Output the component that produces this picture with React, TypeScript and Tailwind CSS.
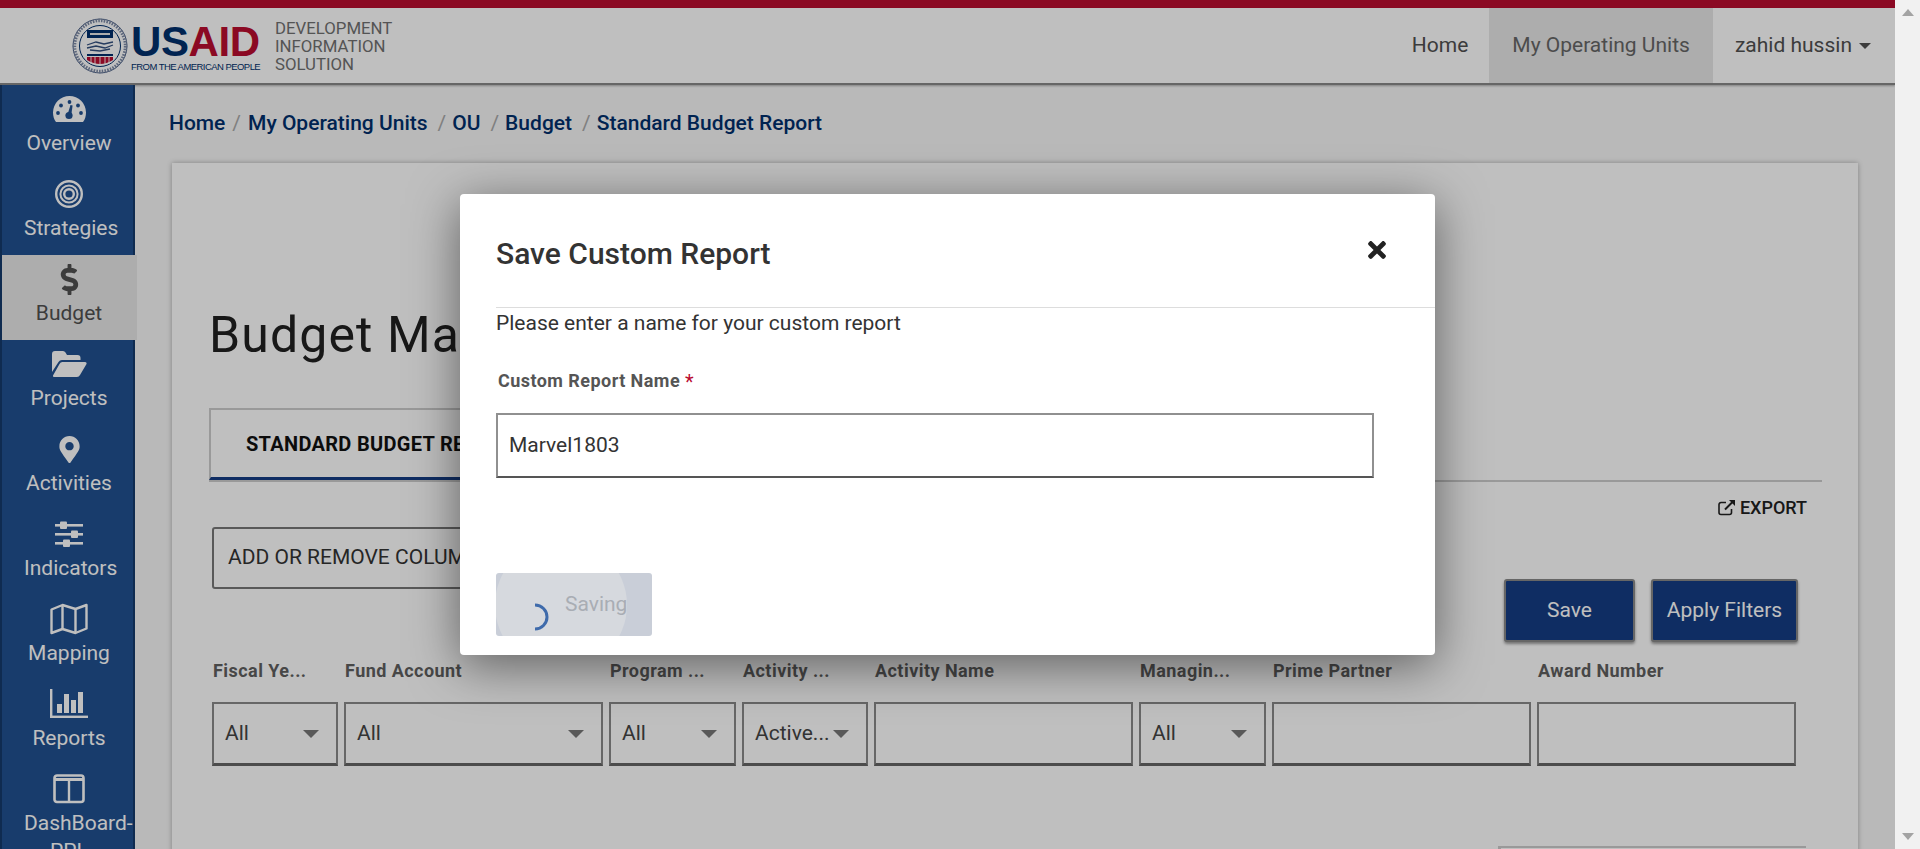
import type { ReactNode } from 'react';
import { FaDollarSign, FaMapMarkerAlt, FaTimes } from 'react-icons/fa';

const GaugeIcon = () => (
  <svg width="33" height="26" viewBox="0 0 33 26" fill="currentColor">
    <path d="M16.5 0 A16.5 16.5 0 0 0 0 16.5 C0 20 1 23.5 3 26 H30 C32 23.5 33 20 33 16.5 A16.5 16.5 0 0 0 16.5 0 Z" />
    <g fill="#205191">
      <circle cx="5" cy="17" r="1.9" />
      <circle cx="8" cy="9.5" r="1.9" />
      <circle cx="16.5" cy="6" r="1.9" />
      <circle cx="25" cy="9.5" r="1.9" />
      <circle cx="28" cy="17" r="1.9" />
      <circle cx="16" cy="19.5" r="3.6" />
      <path d="M17.5 9 L19.6 9.6 L18.2 19.5 L14.5 18.5 Z" />
    </g>
  </svg>
);

const BullseyeIcon = () => (
  <svg width="30" height="30" viewBox="0 0 30 30" fill="none" stroke="currentColor">
    <circle cx="15" cy="15" r="12.8" strokeWidth="2.4" />
    <circle cx="15" cy="15" r="8.6" strokeWidth="2" />
    <circle cx="15" cy="15" r="4.8" strokeWidth="2.4" />
  </svg>
);

const FolderIcon = () => (
  <svg width="35" height="26" viewBox="0 0 35 26" fill="currentColor">
    <path d="M0 3 A3 3 0 0 1 3 0 H11 A3 3 0 0 1 13.5 1.5 L15 4 H25.5 A3 3 0 0 1 28.5 7 V9 H10 A4 4 0 0 0 6.5 11 L0 21 Z" />
    <path d="M10.5 11 H33 A1.5 1.5 0 0 1 34.5 13 L28 24 A4 4 0 0 1 25 26 H2 A1.2 1.2 0 0 1 1 24.5 L7.5 13 A3.5 3.5 0 0 1 10.5 11 Z" />
  </svg>
);

const SlidersIcon = () => (
  <svg width="30" height="30" viewBox="0 0 30 30" fill="currentColor">
    <rect x="1" y="5" width="28" height="2.6" />
    <rect x="6" y="2.5" width="7" height="7.5" rx="1" />
    <rect x="1" y="14" width="28" height="2.6" />
    <rect x="17" y="11.5" width="7" height="7.5" rx="1" />
    <rect x="1" y="23" width="28" height="2.6" />
    <rect x="9" y="20.5" width="7" height="7.5" rx="1" />
  </svg>
);

const MapIcon = () => (
  <svg width="38" height="32" viewBox="0 0 38 32" fill="none" stroke="currentColor" strokeWidth="2.4" strokeLinejoin="round">
    <path d="M1.5 6.5 L12.5 2 L25.5 6 L36.5 2 V25.5 L25.5 30 L12.5 26 L1.5 30 Z" />
    <path d="M12.5 2 V26 M25.5 6 V30" />
  </svg>
);

const ChartIcon = () => (
  <svg width="38" height="30" viewBox="0 0 38 30" fill="currentColor">
    <rect x="0" y="0" width="2.4" height="29" />
    <rect x="0" y="26.6" width="38" height="2.4" />
    <rect x="7" y="15" width="5" height="9" />
    <rect x="14" y="5" width="5" height="19" />
    <rect x="21" y="11" width="5" height="13" />
    <rect x="28" y="3" width="5" height="21" />
  </svg>
);

const ColumnsIcon = () => (
  <svg width="32" height="30" viewBox="0 0 32 30" fill="none" stroke="currentColor">
    <rect x="1.5" y="1.5" width="29" height="26.5" rx="2.5" strokeWidth="2.6" />
    <path d="M1.5 5.5 H30.5" strokeWidth="3" />
    <path d="M16 5 V28" strokeWidth="2.4" />
  </svg>
);

const ExportIcon = () => (
  <svg width="18" height="17" viewBox="0 0 18 17" fill="none" stroke="currentColor" strokeWidth="1.6">
    <path d="M13.5 10 V13.5 A2 2 0 0 1 11.5 15.5 H3 A2 2 0 0 1 1 13.5 V5.5 A2 2 0 0 1 3 3.5 H8" />
    <path d="M7 10.5 L15.5 2" strokeWidth="2" />
    <path d="M11 1 H17 V7 Z" fill="currentColor" stroke="none" />
  </svg>
);

const Seal = () => (
  <svg width="56" height="56" viewBox="0 0 56 56">
    <circle cx="28" cy="28" r="27" fill="#fff" stroke="#4a5f86" strokeWidth="1" />
    <circle cx="28" cy="28" r="25.5" fill="none" stroke="#7c8aa6" strokeWidth="3.4" strokeDasharray="1.6 1.2" />
    <circle cx="28" cy="28" r="20.5" fill="#fff" stroke="#002f6c" strokeWidth="1" />
    <rect x="15" y="12" width="26" height="8" fill="#002f6c" />
    <rect x="18" y="15" width="20" height="2" fill="#e6e6e6" />
    <path d="M15 27 L24 24 L32 26 L41 24 M15 30 L24 28 L33 30 L41 27 M18 32 L28 33 L38 31" fill="none" stroke="#33507f" strokeWidth="1.3" />
    <rect x="15" y="36" width="26" height="2" fill="#002f6c" />
    <path d="M15 39 H41 V42 Q28 50 15 42 Z" fill="#ba0c2f" />
    <path d="M19 39 V46 M23 39 V47 M28 39 V48 M33 39 V47 M37 39 V46" stroke="#fff" strokeWidth="0.9" />
  </svg>
);

const sideItems: { label: string; icon: ReactNode; active?: boolean }[] = [
  { label: 'Overview', icon: <GaugeIcon /> },
  { label: 'Strategies', icon: <BullseyeIcon /> },
  { label: 'Budget', icon: <FaDollarSign size={31} />, active: true },
  { label: 'Projects', icon: <FolderIcon /> },
  { label: 'Activities', icon: <FaMapMarkerAlt size={27} /> },
  { label: 'Indicators', icon: <SlidersIcon /> },
  { label: 'Mapping', icon: <MapIcon /> },
  { label: 'Reports', icon: <ChartIcon /> },
  { label: 'DashBoard-PPL', icon: <ColumnsIcon /> },
];

const filters = [
  { label: 'Fiscal Ye...', value: 'All', width: 'w-[126px]', select: true },
  { label: 'Fund Account', value: 'All', width: 'w-[259px]', select: true },
  { label: 'Program ...', value: 'All', width: 'w-[127px]', select: true },
  { label: 'Activity ...', value: 'Active...', width: 'w-[126px]', select: true },
  { label: 'Activity Name', value: '', width: 'w-[259px]' },
  { label: 'Managin...', value: 'All', width: 'w-[127px]', select: true },
  { label: 'Prime Partner', value: '', width: 'w-[259px]' },
  { label: 'Award Number', value: '', width: 'w-[259px]' },
];

const crumbs = ['Home', 'My Operating Units', 'OU', 'Budget', 'Standard Budget Report'];

export default function App() {
  return (
    <div className="relative flex h-[849px] w-[1920px] overflow-hidden bg-white font-['Roboto',sans-serif] text-[#333]">
      <div className="relative flex w-[1895px] shrink-0 flex-col bg-[#f7f7f7]">
        <div className="h-2 shrink-0 bg-[#ba0c2f]" />

        <header className="flex h-[77px] shrink-0 items-start border-b-2 border-[#888] bg-white pl-[72px] pr-[24px] shadow-[0_1px_2px_rgba(0,0,0,0.3)]">
          <div className="mt-[10px]">
            <Seal />
          </div>
          <div className="ml-[3px] mt-[15px] w-[128px]">
            <div className="whitespace-nowrap font-['Liberation_Sans',sans-serif] text-[42px] font-bold leading-[38px] tracking-[-0.4px]">
              <span className="text-[#002f6c]">US</span>
              <span className="text-[#ba0c2f]">AID</span>
            </div>
            <div className="whitespace-nowrap font-['Liberation_Sans',sans-serif] text-[9.5px] leading-[11px] tracking-[-0.55px] text-[#002f6c]">
              FROM THE AMERICAN PEOPLE
            </div>
          </div>
          <div className="ml-[16px] mt-[11px] text-[16.8px] leading-[18px] text-[#717171]">
            DEVELOPMENT
            <br />
            INFORMATION
            <br />
            SOLUTION
          </div>
          <nav className="ml-auto flex h-[75px] items-center text-[21px] text-[#505050]">
            <span className="pr-[21px]">Home</span>
            <span className="flex h-[75px] items-center bg-[#e7e7e7] px-[23px] text-[#666]">My Operating Units</span>
            <span className="flex items-center pl-[22px]">
              zahid hussin
              <span className="ml-[7px] h-0 w-0 border-x-[6px] border-t-[6px] border-x-transparent border-t-[#505050]" />
            </span>
          </nav>
        </header>

        <div className="flex min-h-0 flex-1">
          <aside className="w-[135px] shrink-0 border-l-2 border-r-2 border-[#143a6b] bg-[#205191] text-white">
            {sideItems.map((item) => (
              <div
                key={item.label}
                className={`flex h-[85px] flex-col items-center pl-[3px] pt-[6px] ${
                  item.active ? 'relative -mr-[4px] bg-[#e7e7e7] pr-[4px] text-[#505050]' : ''
                }`}
              >
                <div className="flex h-[36px] shrink-0 items-center justify-center">{item.icon}</div>
                <div className="mt-[2px] w-[90px] shrink-0 text-center text-[21px] leading-[28px]">{item.label}</div>
              </div>
            ))}
          </aside>

          <main className="min-w-0 flex-1">
            <nav className="ml-[34px] mt-[25px] flex h-[28px] items-center text-[21px] font-medium text-[#002f6c]">
              {crumbs.map((crumb, i) => (
                <span key={crumb} className="flex items-center whitespace-nowrap">
                  {i > 0 && (
                    <span className={`font-normal text-[#aaa] ${i === 1 ? 'mx-[7px]' : 'ml-[10px] mr-[6px]'}`}>/</span>
                  )}
                  {crumb}
                </span>
              ))}
            </nav>

            <section className="ml-[37px] mt-[25px] h-[700px] w-[1686px] bg-white pl-[37px] pr-[36px] pt-[142px] shadow-[0_0_5px_rgba(0,0,0,0.3)]">
              <h1 className="whitespace-nowrap text-[50px] font-normal leading-[60px] tracking-[1.1px] text-[#212121]">Budget Management</h1>

              <div className="mt-[43px] border-b-2 border-[#ccc]">
                <div className="flex h-[72px] w-[288px] items-center whitespace-nowrap border-b-[3px] border-l-2 border-t-2 border-[#ccc] border-b-[#153d84] pl-[35px] text-[20px] font-bold tracking-[0.3px] text-[#111]">
                  STANDARD BUDGET REPORT
                </div>
              </div>

              <div className="flex h-[39px] items-end justify-end pr-[15px]">
                <span className="flex items-center gap-[4px] text-[18px] font-medium text-[#212121]">
                  <ExportIcon />
                  EXPORT
                </span>
              </div>

              <div className="mt-[6px] flex items-start pl-[3px] pr-[24px]">
                <div className="flex h-[62px] w-[400px] items-center whitespace-nowrap rounded-[3px] border-2 border-[#777] pl-[14px] text-[21px] text-[#333]">
                  ADD OR REMOVE COLUMNS
                </div>
                <div className="ml-auto mt-[52px] flex gap-[16px]">
                  <button className="h-[63px] w-[131px] rounded-[3px] border-2 border-[#888] bg-[#153d84] pt-[1px] text-[21px] text-white shadow-[0_2px_3px_rgba(0,0,0,0.4)]">
                    Save
                  </button>
                  <button className="h-[63px] w-[147px] rounded-[3px] border-2 border-[#888] bg-[#153d84] pt-[1px] text-[21px] text-white shadow-[0_2px_3px_rgba(0,0,0,0.4)]">
                    Apply Filters
                  </button>
                </div>
              </div>

              <div className="mt-[16px] flex gap-[6px] pl-[3px]">
                {filters.map((f) => (
                  <div key={f.label} className={`${f.width} shrink-0`}>
                    <div className="h-[24px] truncate pl-[1px] text-[18px] font-bold leading-[26px] tracking-[0.45px] text-[#5f5f5f]">
                      {f.label}
                    </div>
                    <div className="mt-[20px] flex h-[64px] items-center justify-between border-2 border-b-[3px] border-[#8a8a8a] border-b-[#666] pl-[11px] pr-[17px] pt-[1px] text-[21px] text-[#444]">
                      <span>{f.value}</span>
                      {f.select && <span className="h-0 w-0 border-x-[8px] border-t-[8px] border-x-transparent border-t-[#777]" />}
                    </div>
                  </div>
                ))}
              </div>

              <div className="mr-[16px] mt-[80px] ml-auto h-[6px] w-[308px] border-l-[3px] border-t-2 border-[#ccc]" />
            </section>
          </main>
        </div>
      </div>

      <div className="relative flex w-[25px] shrink-0 flex-col items-center justify-between bg-[#f1f1f1] py-[9px]">
        <div className="h-0 w-0 border-x-[6px] border-b-[7px] border-x-transparent border-b-[#a3a3a3]" />
        <div className="h-0 w-0 border-x-[6px] border-t-[7px] border-x-transparent border-t-[#a3a3a3]" />
      </div>

      <div className="absolute left-0 top-0 h-[849px] w-[1895px] bg-black/25">
        <div className="absolute left-[460px] top-[194px] h-[461px] w-[975px] rounded-[4px] bg-white shadow-[0_10px_50px_rgba(0,0,0,0.5)]">
          <div className="ml-[36px] flex h-[114px] items-center justify-between border-b border-[#ddd] pt-[6px]">
            <h2 className="text-[30px] font-medium text-[#333]">Save Custom Report</h2>
            <FaTimes size={26} className="mb-[8px] mr-[45px] text-[#222]" />
          </div>
          <div className="pl-[36px]">
            <p className="text-[21px] leading-[30px] text-[#333]">Please enter a name for your custom report</p>
            <label className="ml-[2px] mt-[30px] block text-[18px] font-bold leading-[24px] tracking-[0.45px] text-[#555]">
              Custom Report Name <span className="relative top-[2px] text-[20px] font-normal text-[#ba0c2f]">*</span>
            </label>
            <div className="mt-[20px] flex h-[65px] w-[878px] items-center border-2 border-[#909090] border-b-[#555] pl-[11px] text-[21px] text-[#333]">
              Marvel1803
            </div>
            <button className="relative mt-[95px] flex h-[63px] w-[156px] items-center overflow-hidden rounded-[3px] bg-[#c9ced8] pt-[1px] text-[21px] text-[#a9adb4]">
              <span className="absolute -left-[1px] -top-[34px] h-[132px] w-[132px] rounded-full bg-[#d6d9de]" />
              <svg className="absolute left-[30px] top-[29px]" width="26" height="30" viewBox="0 0 26 30" fill="none">
                <path d="M9 3 A12 12 0 0 1 9 27" stroke="#3f6bab" strokeWidth="3" />
              </svg>
              <span className="relative ml-[69px]">Saving</span>
            </button>
          </div>
        </div>
      </div>
    </div>
  );
}
